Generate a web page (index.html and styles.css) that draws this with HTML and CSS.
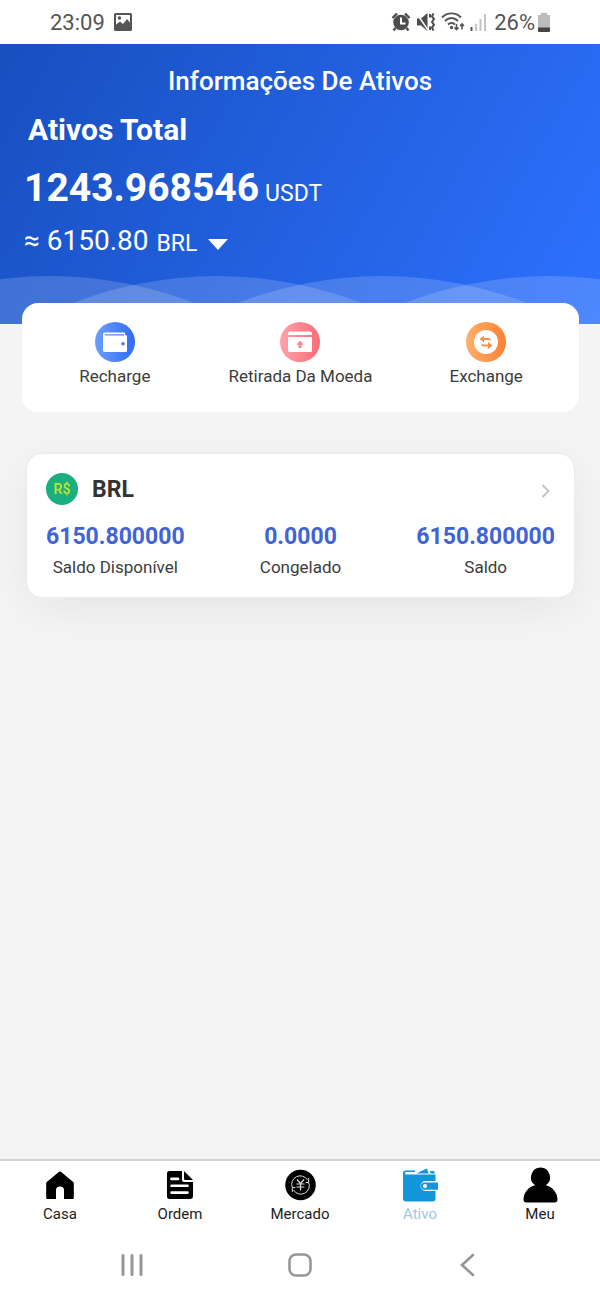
FILE: index.html
```html
<!DOCTYPE html>
<html lang="pt-BR">
<head>
<meta charset="utf-8">
<meta name="viewport" content="width=device-width, initial-scale=1">
<title>Informações De Ativos</title>
<link rel="stylesheet" href="styles.css">
</head>
<body>
<div class="status-bar">
  <div class="status-group">
    <span>23:09</span>
    <svg class="status-picture" width="18" height="18" viewBox="0 0 18 18" aria-hidden="true"><path fill="#555" fill-rule="evenodd" d="M1.500 0h15A1.500 1.500 0 0 1 18 1.500v15a1.500 1.500 0 0 1-1.500 1.500h-15A1.500 1.500 0 0 1 0 16.500v-15A1.500 1.500 0 0 1 1.500 0zM2 2v9.500l4-3 3 2.500 4-5 3 3.500V2z"/><circle cx="5.500" cy="5" r="1.700" fill="#555"/></svg>
  </div>
  <div class="status-group status-right">
    <svg width="20" height="20" viewBox="0 0 20 20" aria-hidden="true"><circle cx="10" cy="10.500" r="7.800" fill="#4d4d4d"/><path d="M1.500 6l4.500-4.500M18.500 6L14 1.500M4.500 16l-2 2.500M15.500 16l2 2.500" stroke="#4d4d4d" stroke-width="2.400" fill="none"/><path d="M10 5.500v6h4.500" stroke="#fff" stroke-width="2" fill="none"/></svg>
    <svg width="20" height="20" viewBox="0 0 20 20" aria-hidden="true"><path d="M1 6.500h4L11.500 1v18L5 13.500H1z" fill="#4d4d4d"/><path d="M1 2l11 16" stroke="#fff" stroke-width="1.400"/><path d="M14 2v3.500M14 14.500V18M17.500 1.500l-1.500 2.800 2 2.800-2 2.800 2 2.800-2 2.800 1.500 3" stroke="#4d4d4d" stroke-width="2" fill="none"/></svg>
    <svg width="24" height="20" viewBox="0 0 24 20" aria-hidden="true"><g fill="none" stroke="#555" stroke-width="1.900"><path d="M1 5.500c5-5.500 14-5.500 19 0M4 9c4-4 9-4 13 0M7 12.500c2-2 5-2 7 0"/><path d="M15.500 12v5.500M13.500 15.500l2 2 2-2M21 17.500V12M19 14l2-2 2 2" stroke-width="1.600"/></g><circle cx="10.500" cy="15.500" r="1.700" fill="#555"/></svg>
    <svg width="17" height="20" viewBox="0 0 17 20" aria-hidden="true"><path d="M1.500 19v-4" stroke="#555" stroke-width="2"/><path d="M6 19v-7M10.500 19V7M15 19V2" stroke="#c4c4c4" stroke-width="2"/></svg>
    <span class="status-level">26%</span>
    <svg class="status-battery" width="12" height="19" viewBox="0 0 12 19" aria-hidden="true"><path fill="#bbb" d="M3 0h6v2h2a1 1 0 0 1 1 1v12H0V3a1 1 0 0 1 1-1h2z"/><path fill="#444" d="M0 14.500h12V18a1 1 0 0 1-1 1H1a1 1 0 0 1-1-1z"/></svg>
  </div>
</div>

<main class="content">
  <header class="hero">
    <svg class="hero-waves" viewBox="0 0 600 48" preserveAspectRatio="none" aria-hidden="true"><g fill="#fff" fill-opacity=".16"><circle cx="50" cy="400" r="400"/><circle cx="217" cy="400" r="400"/><circle cx="382" cy="400" r="400"/><circle cx="549" cy="400" r="400"/></g></svg>
    <h1 class="hero-title">Informações De Ativos</h1>
    <h2 class="hero-label">Ativos Total</h2>
    <p class="hero-total"><strong>1243.968546</strong><span>USDT</span></p>
    <div class="hero-converted">
      <span class="hero-amount">≈ 6150.80</span>
      <label class="currency">
        <select class="currency-select" aria-label="Moeda"><option>BRL</option></select>
        <svg width="20" height="11" viewBox="0 0 20 11" aria-hidden="true"><path d="M0 0h20L10 11z" fill="#fff"/></svg>
      </label>
    </div>
  </header>

  <section class="actions">
    <button class="action" type="button">
      <svg width="40" height="40" viewBox="0 0 40 40" aria-hidden="true"><defs><linearGradient id="blue"><stop stop-color="#6c9efc"/><stop offset="1" stop-color="#2f6bf8"/></linearGradient></defs><circle cx="20" cy="20" r="20" fill="url(#blue)"/><path fill="#fff" fill-rule="evenodd" d="M9.500 10.500H29a1 1 0 0 1 1 1V13h.5a1.500 1.500 0 0 1 1.500 1.500v14a1.500 1.500 0 0 1-1.500 1.500h-21A1.500 1.500 0 0 1 8 28.500V12a1.500 1.500 0 0 1 1.500-1.500zM10 12.200q-.6.500 0 1.200h19v-1.200zM28 20a1.800 1.800 0 1 0 0 3.600 1.800 1.800 0 0 0 0-3.600z"/></svg>
      <span>Recharge</span>
    </button>
    <button class="action" type="button">
      <svg width="40" height="40" viewBox="0 0 40 40" aria-hidden="true"><defs><linearGradient id="pink"><stop stop-color="#ffa3aa"/><stop offset="1" stop-color="#f96b76"/></linearGradient></defs><circle cx="20" cy="20" r="20" fill="url(#pink)"/><path fill="#fff" fill-rule="evenodd" d="M10 9.500h20a2 2 0 0 1 2 2V13H8v-1.500a2 2 0 0 1 2-2zM8 15h24v13.500a1.500 1.500 0 0 1-1.500 1.500h-21A1.500 1.500 0 0 1 8 28.500zM20 18.500l-3.500 4.300h2V26h3v-3.200h2z"/></svg>
      <span>Retirada Da Moeda</span>
    </button>
    <button class="action" type="button">
      <svg width="40" height="40" viewBox="0 0 40 40" aria-hidden="true"><defs><linearGradient id="orange"><stop stop-color="#fdb06b"/><stop offset="1" stop-color="#fb8034"/></linearGradient></defs><circle cx="20" cy="20" r="20" fill="url(#orange)"/><circle cx="20" cy="20" r="12" fill="#fff"/><path fill="#fa8d48" d="M13.500 17l4.500-3.500v2.500h4q2.500 0 3 3-1.500-1-3-1h-4v2.500zM26.500 23.500L22 27v-2.500h-4q-2.500 0-3-3 1.500 1 3 1h4V20z"/></svg>
      <span>Exchange</span>
    </button>
  </section>

  <a class="coin-card" href="#brl">
    <div class="coin-head">
      <span class="coin-badge">R$</span>
      <span class="coin-name">BRL</span>
      <svg class="coin-arrow" width="10" height="14" viewBox="0 0 10 14" aria-hidden="true"><path d="M1.500 1l6 6-6 6" fill="none" stroke="#c4c4c4" stroke-width="2"/></svg>
    </div>
    <div class="coin-stats">
      <div class="stat"><strong>6150.800000</strong><span>Saldo Disponível</span></div>
      <div class="stat"><strong>0.0000</strong><span>Congelado</span></div>
      <div class="stat"><strong>6150.800000</strong><span>Saldo</span></div>
    </div>
  </a>
</main>

<nav class="tab-bar">
  <a class="tab" href="#casa">
    <svg width="36" height="36" viewBox="0 0 36 36" aria-hidden="true"><path d="M18 4.500q.6 0 1.200.5l12 10q.6.500.6 1.300V31q0 1-1 1H22V23q0-3.500-4-3.500T14 23v9H5.200q-1 0-1-1V16.300q0-.8.6-1.300l12-10Q17.400 4.500 18 4.500z"/></svg>
    <span>Casa</span>
  </a>
  <a class="tab" href="#ordem">
    <svg width="36" height="36" viewBox="0 0 36 36" aria-hidden="true"><path fill-rule="evenodd" d="M7.500 4H20v9a2 2 0 0 0 2 2h9v14a3 3 0 0 1-3 3H7.500a2.500 2.500 0 0 1-2.500-2.500v-23A2.500 2.500 0 0 1 7.500 4zM9.500 10.500a1.200 1.200 0 0 0 0 2.800h6.500a1.200 1.200 0 0 0 0-2.800zM9.500 17.500a1.200 1.200 0 0 0 0 2.600h16a1.200 1.200 0 0 0 0-2.600zM9.500 24.300a1.200 1.200 0 0 0 0 2.600h16a1.200 1.200 0 0 0 0-2.600z"/><path d="M22 4l9 9h-7.500a1.500 1.500 0 0 1-1.500-1.500z"/></svg>
    <span>Ordem</span>
  </a>
  <a class="tab" href="#mercado">
    <svg width="36" height="36" viewBox="0 0 36 36" aria-hidden="true"><circle cx="18.500" cy="18" r="15.300"/><g fill="none" stroke="#ddd"><path d="M10.300 20.500A8.500 8.500 0 0 1 25.500 13M26.700 15.500A8.500 8.500 0 0 1 11.500 23M26.700 11v4.500h-3M10.300 25v-4.500h3"/><path d="M15 12.500l3.500 4 3.500-4M18.500 16.500v7M14.500 17h8M14.500 20h8" stroke-width="1.200"/></g></svg>
    <span>Mercado</span>
  </a>
  <a class="tab tab-active" href="#ativo" aria-current="page">
    <svg width="36" height="36" viewBox="0 0 36 36" aria-hidden="true"><path d="M1 6q0-2.500 2.500-2.500H13V5H4Q3 5 3 6t1 1.500h29.500V14H23.500a5 5 0 0 0 0 10h10v7.500a3 3 0 0 1-3 3H4a3 3 0 0 1-3-3z"/><path d="M14.500 6.500l6-3 4.500-2 1.500 5zM28 4h3.500q1.500.500 1.500 2.500h-4.500z"/><path fill-rule="evenodd" d="M22.500 15.500H36v7.200H22.500a3.600 3.600 0 0 1 0-7.200zM23 17a2.100 2.100 0 1 0 0 4.200 2.100 2.100 0 0 0 0-4.200z"/></svg>
    <span>Ativo</span>
  </a>
  <a class="tab" href="#meu">
    <svg width="36" height="36" viewBox="0 0 36 36" aria-hidden="true"><path d="M18.500.5a9.700 9.700 0 0 1 5.300 17.700C31 20 35.500 26 35.500 32.500q0 3-3 3h-28q-3 0-3-3C1.500 26 6 20 13.200 18.200A9.700 9.700 0 0 1 18.500.5z"/></svg>
    <span>Meu</span>
  </a>
</nav>

<div class="system-nav">
  <button type="button" aria-label="Recentes"><svg width="24" height="24" viewBox="0 0 24 24"><path d="M3 2.500v19M12 2.500v19M21 2.500v19" stroke="#969696" stroke-width="3" stroke-linecap="round"/></svg></button>
  <button type="button" aria-label="Início"><svg width="24" height="24" viewBox="0 0 24 24"><rect x="1.500" y="1.500" width="21" height="21" rx="6.500" fill="none" stroke="#969696" stroke-width="2.600"/></svg></button>
  <button type="button" aria-label="Voltar"><svg width="24" height="24" viewBox="0 0 24 24"><path d="M17 2L6 12l11 10" fill="none" stroke="#969696" stroke-width="2.600" stroke-linecap="round"/></svg></button>
</div>
</body>
</html>
```
FILE: styles.css
```css
* {
  box-sizing: border-box;
}

body {
  margin: 0;
  min-height: 100vh;
  display: flex;
  flex-direction: column;
  background: #fff;
  color: #3c3c3c;
  font-family: Roboto, "Noto Sans", sans-serif;
}

svg {
  display: block;
  flex: none;
}

button,
select {
  padding: 0;
  border: 0;
  background: none;
  color: inherit;
  font: inherit;
}

a {
  color: inherit;
  text-decoration: none;
}

.status-bar {
  display: flex;
  justify-content: space-between;
  align-items: center;
  height: 44px;
  padding: 0 50px;
  color: #555;
  font-size: 22px;
}

.status-group {
  display: flex;
  align-items: center;
  gap: 9px;
}

.status-right {
  gap: 5px;
}

.status-level {
  margin-left: 2px;
}

.status-battery {
  margin-left: -2px;
}

.content {
  flex: 1;
  background: #f4f4f4;
}

.hero {
  position: relative;
  height: 280px;
  padding: 20px 24px 0;
  background: linear-gradient(120deg, #184fbf, #2d71ff);
  color: #fff;
}

.hero-waves {
  position: absolute;
  left: 0;
  bottom: 0;
  width: 100%;
  height: 48px;
}

.hero-title {
  margin: 0;
  font-size: 26px;
  font-weight: 500;
  line-height: 34px;
  text-align: center;
}

.hero-label {
  margin: 12px 4px 0;
  font-size: 30px;
  font-weight: 700;
  line-height: 40px;
}

.hero-total {
  display: flex;
  align-items: baseline;
  gap: 6px;
  margin: 14px 0 0;
  font-size: 23px;
  line-height: 48px;
}

.hero-total strong {
  font-size: 39px;
}

.hero-converted {
  display: flex;
  align-items: center;
  gap: 8px;
  margin-top: 4px;
  line-height: 38px;
}

.hero-amount {
  font-size: 28px;
}

.currency {
  display: flex;
  align-items: center;
  gap: 10px;
  padding-top: 6px;
}

.currency-select {
  appearance: none;
  font-size: 23px;
  line-height: 32px;
}

.currency-select option {
  color: #3c3c3c;
}

.actions {
  position: relative;
  display: grid;
  grid-template-columns: repeat(3, 1fr);
  margin: -21px 21px 0 22px;
  padding: 19px 0 24px;
  border-radius: 16px;
  background: #fff;
}

.action {
  display: flex;
  flex-direction: column;
  align-items: center;
  gap: 2px;
  font-size: 17px;
  line-height: 24px;
}

.coin-card {
  display: block;
  margin: 41px 25px 0 26px;
  padding: 19px 19px 16px;
  border: 1px solid #ebebeb;
  border-radius: 16px;
  background: #fff;
  box-shadow: 0 12px 44px rgba(0, 0, 0, 0.06);
}

.coin-head {
  display: flex;
  align-items: center;
  height: 32px;
}

.coin-badge {
  width: 32px;
  height: 32px;
  border-radius: 50%;
  background: #1aaf80;
  color: #c5e52a;
  font-size: 14px;
  font-weight: 500;
  line-height: 32px;
  text-align: center;
}

.coin-name {
  margin-left: 14px;
  color: #333;
  font-size: 23px;
  font-weight: 700;
}

.coin-arrow {
  margin: 4px 4px 0 auto;
}

.coin-stats {
  display: flex;
  justify-content: space-between;
  margin-top: 16px;
}

.stat {
  display: flex;
  flex-direction: column;
  align-items: center;
  font-size: 17px;
  line-height: 28px;
}

.stat strong {
  color: #4163d8;
  font-size: 23px;
  line-height: 32px;
}

.tab-bar {
  display: grid;
  grid-template-columns: repeat(5, 1fr);
  padding: 6px 0 5px;
  border-top: 2px solid #d2d2d2;
}

.tab {
  display: flex;
  flex-direction: column;
  align-items: center;
  color: #1c1c1c;
  font-size: 15px;
  line-height: 22px;
}

.tab svg {
  fill: #000;
}

.tab-active {
  color: #a0c8ea;
}

.tab-active svg {
  fill: #1296db;
}

.system-nav {
  display: flex;
  justify-content: space-between;
  padding: 23px 120px;
}
```
